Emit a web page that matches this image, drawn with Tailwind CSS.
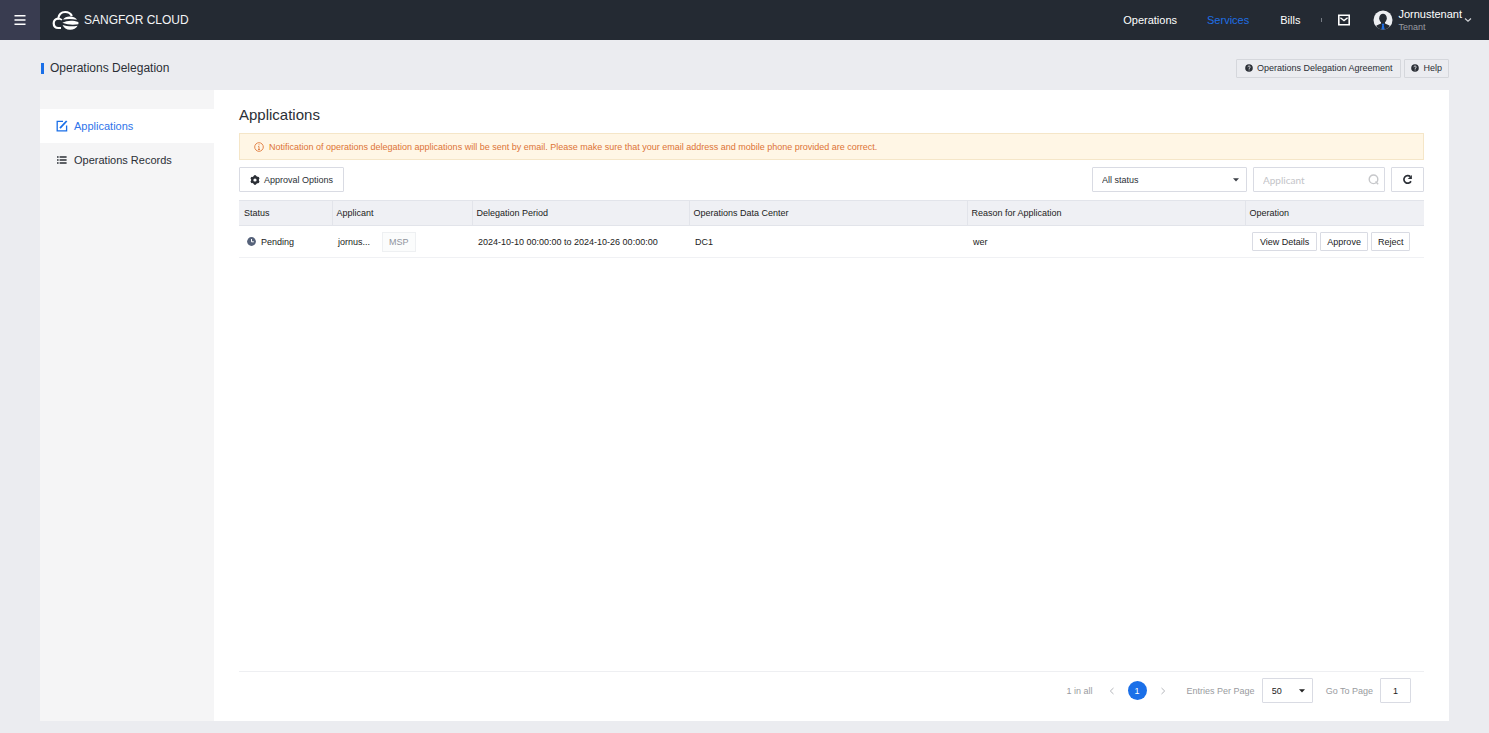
<!DOCTYPE html>
<html lang="en">
<head>
<meta charset="utf-8">
<meta name="viewport" content="width=device-width, initial-scale=1">
<title>Operations Delegation</title>
<script src="https://cdn.jsdelivr.net/npm/@tailwindcss/browser@4"></script>
</head>
<body class="flex min-h-screen flex-col bg-[#ebecf0] font-['Liberation_Sans',Arial,sans-serif] text-[9px] leading-3 text-[#2b2f36]">

<header class="flex h-10 shrink-0 items-center bg-[#242a33] text-white">
  <button type="button" aria-label="Menu" class="flex h-10 w-10 items-center justify-center bg-[#393c50]">
    <svg class="size-3" viewBox="0 0 12 12" fill="none" stroke="#fff" stroke-width="1.5"><path d="M0.500 1.800h11M0.500 6h11M0.500 10.200h11"/></svg>
  </button>
  <a href="#" class="ml-3 flex items-center gap-1 text-[12px] leading-4 text-[#f4f5f6]">
    <svg class="h-5 w-7" viewBox="0 0 28 20" fill="none">
      <path d="M9 18H6.400C3.500 18 1.700 16 1.700 13.300C1.700 10.700 3.500 8.700 6.200 8.600C6.800 4.300 9.800 2 13.200 2C16.300 2 18.700 3.500 19.900 6" stroke="#fff" stroke-width="2.200"/>
      <path d="M6.200 8.600C7.800 8.600 9 9 9.900 10" stroke="#fff" stroke-width="1.800"/>
      <path d="M11 9.600C12.500 7.300 15 6.300 18 6.400C21.500 6.500 24 7.900 25 9.800C20 8.800 15.500 8.800 11 9.600Z" fill="#fff"/>
      <path d="M10.300 12.700C15 10.300 21 9.900 26.300 12.100C26.600 12.800 26.600 13.500 26.300 14.200C21 15.200 15 14.700 10.300 12.700Z" fill="#fff"/>
      <path d="M10.600 15C15 16.500 20.500 16.700 25.600 15.800C24 18.500 21.300 19.800 18 19.700C14.500 19.700 11.900 18 10.600 15Z" fill="#fff"/>
    </svg>
    SANGFOR CLOUD
  </a>
  <nav class="ml-auto flex items-center text-[11px] leading-4">
    <a href="#" class="mr-[30px]">Operations</a>
    <a href="#" class="mr-[31px] text-[#1f6fe5]">Services</a>
    <a href="#">Bills</a>
  </nav>
  <span class="ml-[21px] h-1 w-px bg-[#777c84]"></span>
  <button type="button" aria-label="Messages" class="ml-4">
    <svg class="block h-3 w-3" viewBox="0 0 12 12" fill="none" stroke="#fff" stroke-width="1.600"><path d="M0.800 1.300h10.400v9.400H0.800z"/><path d="M2.400 3.800L6 6.600L9.600 3.800" stroke-width="1.400"/></svg>
  </button>
  <button type="button" class="ml-[23px] mr-[17px] flex items-center text-left">
    <svg class="size-5" viewBox="0 0 20 20"><defs><clipPath id="avatar"><circle cx="10" cy="10" r="9.500"/></clipPath></defs><g clip-path="url(#avatar)"><rect width="20" height="20" fill="#eceef1"/><ellipse cx="10" cy="8.300" rx="3.800" ry="4.600" fill="#242a33"/><path d="M8 11h4v2.400l4.500 2V20H3.500v-4.600L8 13.400z" fill="#242a33"/><path d="M8.600 13.800h2.800l-.6 1.600 1 4.600H8.200l1-4.600z" fill="#1f6fe5"/></g></svg>
    <span class="ml-[5px] flex flex-col">
      <span class="text-[11px] leading-[14px]">Jornustenant</span>
      <span class="text-[#989ba1]">Tenant</span>
    </span>
    <svg class="ml-[2px] size-2" viewBox="0 0 8 8" fill="none" stroke="#cfd1d5" stroke-width="1.200"><path d="M1 2.500L4 5.300L7 2.500"/></svg>
  </button>
</header>

<div class="mx-10 flex h-[50px] shrink-0 items-center justify-between pt-1.5">
  <h1 class="flex items-center gap-1.5 text-[12px] leading-4"><span class="ml-px h-[11px] w-[3px] bg-[#1a6fe8]"></span>Operations Delegation</h1>
  <div class="flex gap-[3px]">
    <button type="button" class="flex h-[19px] items-center gap-1 rounded-[1px] border border-[#d5d7dc] px-2">
      <svg class="size-2" viewBox="0 0 8 8"><circle cx="4" cy="4" r="3.800" fill="#2b2f36"/><path d="M2.900 3.200C2.900 1.600 5.300 1.700 5.200 3.100C5.200 4 4.100 3.900 4.100 4.900M4.100 5.500v.9" fill="none" stroke="#ebecf0" stroke-width=".9"/></svg>
      Operations Delegation Agreement
    </button>
    <button type="button" class="flex h-[19px] items-center gap-1 rounded-[1px] border border-[#d5d7dc] px-1.5">
      <svg class="size-2" viewBox="0 0 8 8"><circle cx="4" cy="4" r="3.800" fill="#2b2f36"/><path d="M2.900 3.200C2.900 1.600 5.300 1.700 5.200 3.100C5.200 4 4.100 3.900 4.100 4.900M4.100 5.500v.9" fill="none" stroke="#ebecf0" stroke-width=".9"/></svg>
      Help
    </button>
  </div>
</div>

<div class="mx-10 mb-3 flex grow bg-white">
  <aside class="w-[174px] shrink-0 bg-[#f5f5f6] pt-[19px] text-[11px] leading-4">
    <a href="#" class="flex h-[34px] items-center gap-1.5 bg-white pl-4 text-[#2f74ea]">
      <svg class="size-3" viewBox="0 0 12 12" fill="none" stroke="#1a6fe8" stroke-width="1.300"><path d="M7 1.400H1.200v9.400h9.400V5.500"/><path d="M4 8.200L10.700 1" stroke-width="1.800"/></svg>
      Applications
    </a>
    <a href="#" class="flex h-[34px] items-center gap-1.5 pl-4">
      <svg class="size-3" viewBox="0 0 12 12" fill="none" stroke="#2b2f36"><path d="M1 3h1.600M3.600 3h7M1 6h1.600M3.600 6h7M1 9h1.600M3.600 9h7" stroke-width="1.500"/></svg>
      Operations Records
    </a>
  </aside>

  <main class="flex min-w-0 grow flex-col px-[25px]">
    <h2 class="mt-[15px] text-[15px] leading-5">Applications</h2>
    <p class="mt-2 flex h-[27px] items-center gap-[5px] border border-[#f5e6c8] bg-[#fff6e5] pl-3.5 text-[#dd7435]">
      <svg class="size-2.5" viewBox="0 0 10 10" fill="none" stroke="#e07b3c" stroke-width=".9"><circle cx="5" cy="5" r="4.300"/><path d="M5 2.300v1M4.200 4.500H5v3M4 7.500h2"/></svg>
      Notification of operations delegation applications will be sent by email. Please make sure that your email address and mobile phone provided are correct.
    </p>

    <div class="mt-[7px] flex h-[25px]">
      <button type="button" class="flex items-center gap-1 rounded-[1px] border border-[#d9dbe3] px-2.5">
        <svg class="size-2.5" viewBox="0 0 10 10" fill="none"><circle cx="5" cy="5" r="2.900" stroke="#2b2f36" stroke-width="2.200"/><path d="M5 .3v9.400M.9 2.600l8.200 4.800M.9 7.400l8.200-4.800" stroke="#2b2f36" stroke-width="2.200"/><circle cx="5" cy="5" r="1.600" fill="#fff"/></svg>
        Approval Options
      </button>
      <div class="relative ml-auto w-[155px]">
        <select aria-label="Status filter" class="h-full w-full appearance-none rounded-[1px] border border-[#d9dbe3] bg-white px-[9px]"><option>All status</option></select>
        <svg class="pointer-events-none absolute right-2 top-[11px] h-1 w-1.5" viewBox="0 0 6 4"><path d="M0 .3h6L3 3.600z" fill="#3b3f46"/></svg>
      </div>
      <div class="relative ml-1.5 w-[132px]">
        <input type="text" aria-label="Applicant" placeholder="Applicant" class="h-full w-full rounded-[1px] border border-[#d9dbe3] px-[9px] font-[Lato,sans-serif] text-[10px] placeholder:text-[#c3c4c8]">
        <svg class="pointer-events-none absolute right-1.5 top-[7px] size-[11px]" viewBox="0 0 11 11" fill="none" stroke="#c6c7ca" stroke-width="1.400"><circle cx="5.500" cy="5.300" r="4.300"/><path d="M7.500 7.500l2.700 2.800"/></svg>
      </div>
      <button type="button" aria-label="Refresh" class="ml-1.5 flex w-[33px] items-center justify-center rounded-[1px] border border-[#d9dbe3]">
        <svg class="size-[11px]" viewBox="0 0 11 11" fill="none"><path d="M8.400 2.700A3.800 3.800 0 1 0 9 7.300" stroke="#2b2f36" stroke-width="1.700"/><path d="M9.900.9v4.200H5.700z" fill="#2b2f36"/></svg>
      </button>
    </div>

    <table class="mt-2 w-full table-fixed border-collapse text-left text-[#222]">
      <colgroup><col class="w-[93px]"><col class="w-[140px]"><col class="w-[217px]"><col><col><col class="w-[179px]"></colgroup>
      <thead>
        <tr class="h-[25px] border-y border-[#e2e4ea] bg-[#eff0f4]">
          <th class="px-[5px] font-normal">Status</th>
          <th class="border-l border-[#e2e4ea] px-1 font-normal">Applicant</th>
          <th class="border-l border-[#e2e4ea] px-1 font-normal">Delegation Period</th>
          <th class="border-l border-[#e2e4ea] px-1 font-normal">Operations Data Center</th>
          <th class="border-l border-[#e2e4ea] px-1 font-normal">Reason for Application</th>
          <th class="border-l border-[#e2e4ea] px-1 font-normal">Operation</th>
        </tr>
      </thead>
      <tbody>
        <tr class="h-8 border-b border-[#f0f1f4]">
          <td class="px-2"><span class="flex items-center gap-[5px]"><svg class="size-[9px]" viewBox="0 0 9 9"><circle cx="4.500" cy="4.500" r="4.400" fill="#56627a"/><path d="M4.500 2v2.800h2.300" fill="none" stroke="#fff" stroke-width="1"/></svg>Pending</span></td>
          <td class="px-1.5"><span class="flex items-center gap-3">jornus...<span class="border border-[#eef0f2] bg-[#fbfcfc] px-1.5 py-[3px] text-[#8f949c]">MSP</span></span></td>
          <td class="px-1.5">2024-10-10 00:00:00 to 2024-10-26 00:00:00</td>
          <td class="px-1.5">DC1</td>
          <td class="px-1.5">wer</td>
          <td class="pl-[7px]"><div class="flex gap-[3px] whitespace-nowrap">
            <button type="button" class="h-[19px] rounded-[1px] border border-[#d9dbe3] px-[7px]">View Details</button>
            <button type="button" class="h-[19px] rounded-[1px] border border-[#d9dbe3] px-1.5">Approve</button>
            <button type="button" class="h-[19px] rounded-[1px] border border-[#d9dbe3] px-1.5">Reject</button>
          </div></td>
        </tr>
      </tbody>
    </table>

    <footer class="mt-auto flex h-[50px] items-start justify-end border-t border-[#eeeff2] pr-[13px] pt-1.5 text-[#999ba0]">
      <div class="flex h-[25px] items-center">
        <span class="mr-[15px]">1 in all</span>
        <button type="button" aria-label="Previous page"><svg class="size-2" viewBox="0 0 8 8" fill="none" stroke="#b4b6bb"><path d="M5.500 1L2.300 4L5.500 7"/></svg></button>
        <button type="button" aria-current="page" class="mx-3 size-[19px] rounded-full bg-[#1a6fe8] text-white">1</button>
        <button type="button" aria-label="Next page"><svg class="size-2" viewBox="0 0 8 8" fill="none" stroke="#b4b6bb"><path d="M2.500 1L5.700 4L2.500 7"/></svg></button>
        <label for="per-page" class="ml-5 mr-[7px]">Entries Per Page</label>
        <div class="relative h-[25px] w-[51px]">
          <select id="per-page" class="h-full w-full appearance-none rounded-[1px] border border-[#d9dbe3] bg-white px-[9px] text-[#222]"><option>50</option></select>
          <svg class="pointer-events-none absolute right-2 top-[11px] h-1 w-1.5" viewBox="0 0 6 4"><path d="M0 .3h6L3 3.600z" fill="#222"/></svg>
        </div>
        <label for="goto" class="ml-[13px] mr-[7px]">Go To Page</label>
        <input id="goto" type="text" value="1" class="h-[25px] w-[31px] rounded-[1px] border border-[#d9dbe3] text-center text-[#222]">
      </div>
    </footer>
  </main>
</div>
</body>
</html>
